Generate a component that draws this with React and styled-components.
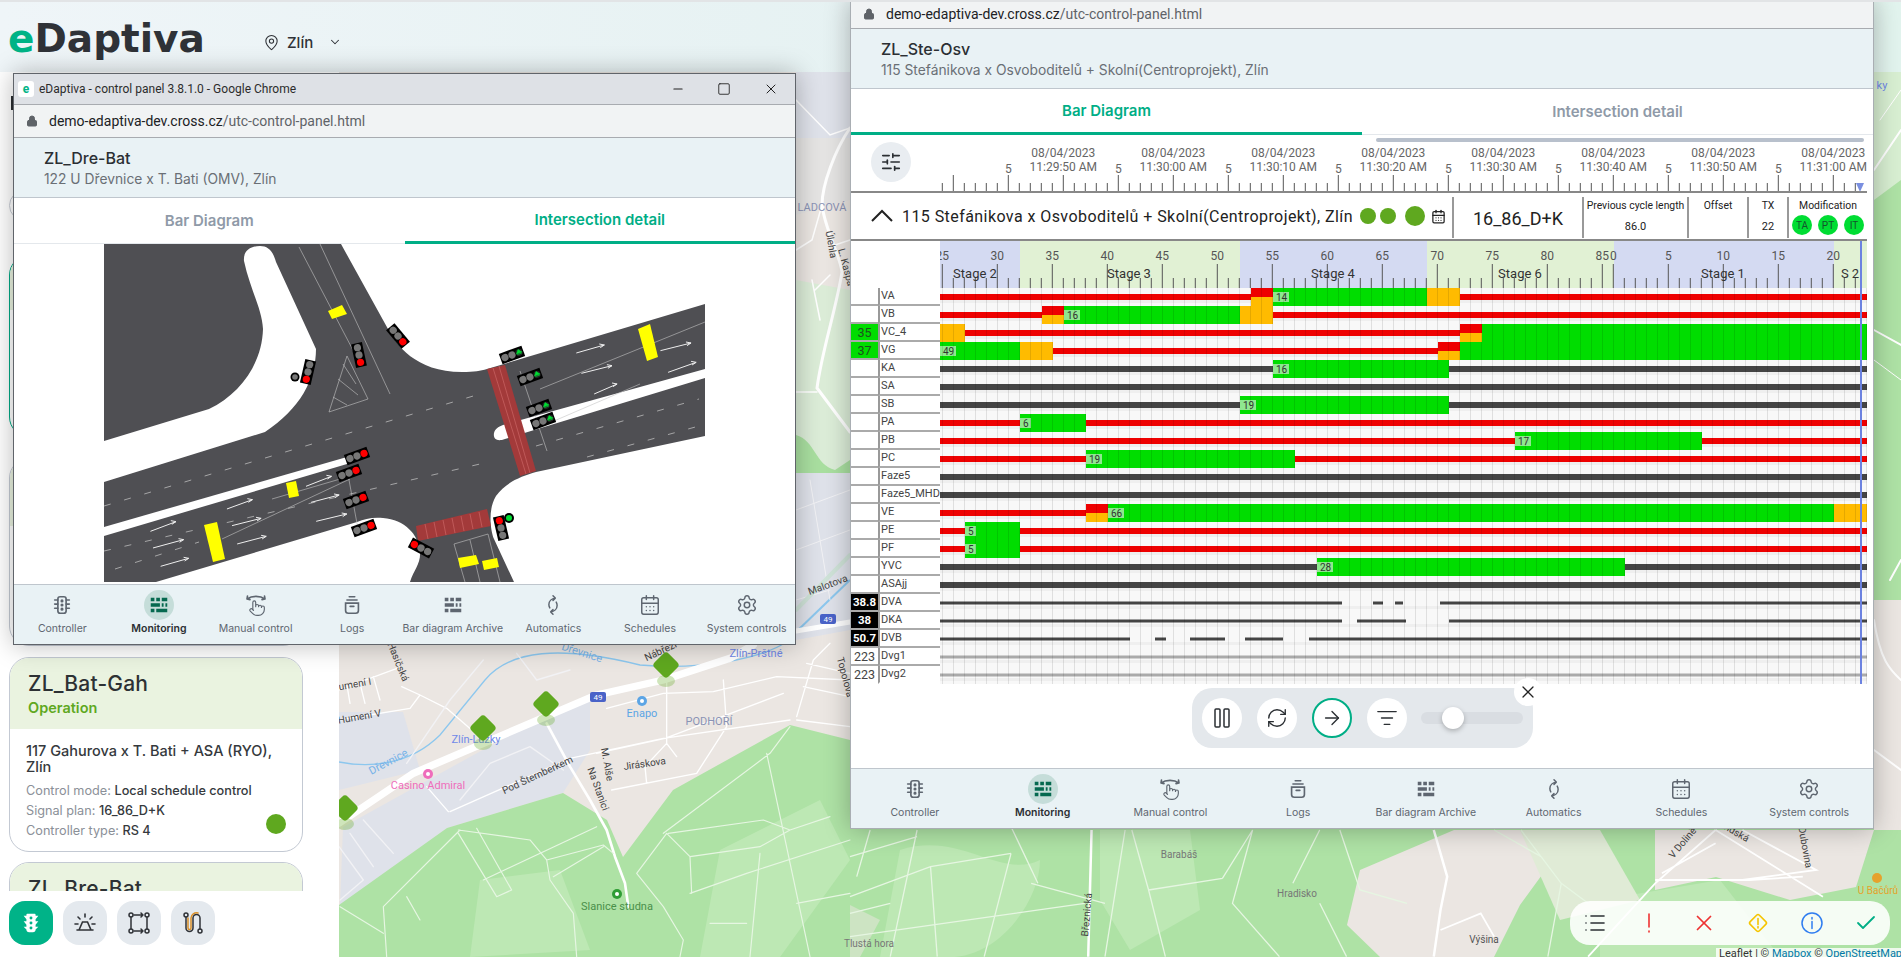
import React from 'react';
import styled, { createGlobalStyle, css } from 'styled-components';
import {
  Settings, CalendarDays, Pause, ArrowRight, X, Check, List, SlidersHorizontal, RefreshCw,
  ListFilter, Lock, Minus, Square, MapPin, ChevronDown
} from 'lucide-react';

const GlobalStyle = createGlobalStyle`
  html, body { margin: 0; padding: 0; background: #fff; }
  body { font-family: Inter, "Noto Sans", sans-serif; color: #2b2f33; }
  * { box-sizing: border-box; }
`;

const Page = styled.div`
  position: relative;
  width: 1901px;
  height: 957px;
  overflow: hidden;
  display: flex;
  flex-direction: column;
  background: #fff;
  border-top: 2px solid #e2e4e6;
`;

const TopBar = styled.header`
  height: 70px;
  display: flex;
  align-items: center;
  padding-left: 8px;
  background: linear-gradient(90deg, #eff5f8 0%, #e4f1f1 55%, #e2f4ee 100%);
`;

const Logo = styled.div`
  font-family: "DejaVu Sans", sans-serif;
  font-size: 39px;
  font-weight: 700;
  letter-spacing: 0;
  color: #2f3237;
  line-height: 1;
  margin-top: 2px;
  width: 255px;
  span { color: #00b386; }
`;

const Location = styled.div`
  display: flex;
  align-items: center;
  gap: 7px;
  font-size: 15px;
  font-weight: 500;
  color: #2f3237;
  margin-top: 10px;
  svg:last-child { margin-left: 8px; }
`;

const Main = styled.div`
  flex: 1;
  display: flex;
  min-height: 0;
`;

const LeftPanel = styled.aside`
  width: 339px;
  flex: none;
  display: flex;
  flex-direction: column;
  padding-left: 9px;
  background: #fff;
`;

const TitleMark = styled.div`
  width: 4px;
  height: 14px;
  margin: 24px 0 0 2px;
  background: #2b2f33;
`;

const SearchBox = styled.div`
  width: 294px;
  height: 31px;
  margin-top: 80px;
  border: 1px solid #c6cbd3;
  border-radius: 16px;
`;

const CardList = styled.div`
  flex: 1;
  min-height: 0;
  overflow: hidden;
  margin-top: 34px;
`;

const Card = styled.article`
  width: 294px;
  height: ${p => p.$h}px;
  margin-bottom: ${p => p.$mb}px;
  border: 1px solid ${p => (p.$selected ? '#00a884' : '#c3c9d3')};
  border-radius: 20px;
  overflow: hidden;
  background: #fff;
`;

const CardHead = styled.div`
  height: ${p => p.$h}px;
  padding: 13px 18px 0;
  background: #eaf3e0;
`;

const CardTitle = styled.div`
  font-size: 21px;
  font-weight: 500;
  letter-spacing: .2px;
  line-height: 26px;
  color: #2d3134;
`;

const CardState = styled.div`
  font-size: 14.5px;
  font-weight: 600;
  line-height: 22px;
  color: #5fa81f;
`;

const CardBody = styled.div`
  position: relative;
  padding: 14px 16px 0;
`;

const CardName = styled.div`
  font-size: 14.5px;
  font-weight: 500;
  line-height: 16px;
  margin-bottom: 6px;
  color: #35393d;
`;

const CardLine = styled.div`
  font-size: 12.7px;
  line-height: 20px;
  color: #8b9098;
  b { font-weight: 500; color: #35393d; }
`;

const CardDot = styled.span`
  position: absolute;
  right: 16px;
  bottom: 7px;
  width: 20px;
  height: 20px;
  border-radius: 50%;
  background: #5fa81f;
`;

const BottomBar = styled.div`
  height: 66px;
  flex: none;
  display: flex;
  gap: 10px;
  padding-top: 10px;
`;

const ModeButton = styled.button`
  width: 44px;
  height: 44px;
  padding: 0;
  border: 0;
  border-radius: 16px;
  display: flex;
  align-items: center;
  justify-content: center;
  background: ${p => (p.$active ? '#00b388' : '#e4e9ee')};
  color: ${p => (p.$active ? '#fff' : '#2f3237')};
`;

const MapArea = styled.div`
  flex: 1;
  min-width: 0;
  position: relative;
  background: #ebe6e2;
  svg { display: block; }
`;

const Attribution = styled.div`
  position: absolute;
  right: 0;
  bottom: 0;
  height: 9px;
  width: 185px;
  padding-left: 3px;
  overflow: hidden;
  font-family: Roboto, sans-serif;
  font-size: 11px;
  line-height: 11px;
  white-space: nowrap;
  background: rgba(255, 255, 255, .8);
  color: #333;
  span { color: #0078a8; }
`;

const StatusBar = styled.div`
  position: absolute;
  left: 1231px;
  top: 829px;
  width: 320px;
  height: 44px;
  display: flex;
  align-items: center;
  justify-content: space-between;
  padding: 0 12px 0 13px;
  border-radius: 20px;
  background: rgba(255, 255, 255, .88);
`;

const PopupWindow = styled.section`
  position: absolute;
  left: ${p => p.$left}px;
  top: ${p => p.$top}px;
  width: ${p => p.$w}px;
  height: ${p => p.$h}px;
  display: flex;
  flex-direction: column;
  background: #fff;
  box-shadow: 0 0 24px rgba(0, 0, 0, .28);
  ${p => p.$framed && css`border: 1px solid #60646a;`}
  ${p => !p.$framed && css`border-right: 1px solid #a9aeb3; border-bottom: 1px solid #a9aeb3; border-left: 1px solid #a9aeb3;`}
`;

const TitleBar = styled.div`
  height: 31px;
  flex: none;
  display: flex;
  align-items: center;
  padding-left: 4px;
  background: #dee1e6;
  border-bottom: 1px solid #a8abb0;
  font-family: Roboto, sans-serif;
  font-size: 12px;
  color: #2c2c2c;
`;

const Favicon = styled.span`
  width: 16px;
  height: 16px;
  margin-right: 5px;
  display: flex;
  align-items: center;
  justify-content: center;
  border-radius: 3px;
  background: #fff;
  color: #00b386;
  font-weight: 700;
  font-size: 12px;
`;

const WindowControls = styled.div`
  margin-left: auto;
  display: flex;
  gap: 32px;
  padding-right: 16px;
  align-items: center;
  color: #222;
`;

const AddressBar = styled.div`
  height: ${p => p.$h}px;
  flex: none;
  display: flex;
  align-items: center;
  gap: 11px;
  padding-left: 12px;
  background: #f1f3f4;
  border-bottom: 1px solid #a8abb0;
  font-family: Roboto, sans-serif;
  font-size: 14px;
  color: #202124;
  span { color: #5f6368; }
`;

const WindowHead = styled.div`
  height: 60px;
  flex: none;
  padding: 9px 30px 0;
  background: #e9f2f5;
  border-bottom: 1px solid #bfc6cd;
`;

const WindowTitle = styled.div`
  font-size: 16px;
  font-weight: 500;
  line-height: 23px;
  color: #2b2f33;
`;

const WindowSub = styled.div`
  font-size: 13.8px;
  line-height: 18px;
  color: #6a6f75;
`;

const Tabs = styled.div`
  height: 46px;
  flex: none;
  display: grid;
  grid-template-columns: 1fr 1fr;
`;

const Tab = styled.div`
  display: flex;
  align-items: center;
  justify-content: center;
  font-size: 15px;
  font-weight: 600;
  color: ${p => (p.$active ? '#00ae86' : '#8f9aa8')};
  border-bottom: ${p => (p.$active ? '3px solid #00ae86' : '1px solid #e4e8ec')};
`;

const WindowContent = styled.div`
  flex: 1;
  min-height: 0;
  position: relative;
  display: flex;
  flex-direction: column;
`;

const IntersectionView = styled.div`
  flex: 1;
  display: flex;
  justify-content: center;
  svg { display: block; }
`;

const NavBar = styled.nav`
  height: 60px;
  flex: none;
  display: flex;
  background: #e9f2f5;
  border-top: 1px solid #bfc6cd;
`;

const NavItem = styled.div`
  flex: 1 1 0;
  padding: 5px 2px 0;
  display: flex;
  flex-direction: column;
  align-items: center;
  font-size: 10.5px;
  font-weight: ${p => (p.$active ? 600 : 400)};
  color: ${p => (p.$active ? '#2b2f33' : '#5e6670')};
  white-space: nowrap;
`;

const NavIcon = styled.span`
  width: 30px;
  height: 30px;
  border-radius: 50%;
  display: flex;
  align-items: center;
  justify-content: center;
  margin-bottom: 2px;
  background: ${p => (p.$active ? '#c5ddd9' : 'transparent')};
  color: ${p => (p.$active ? '#05694f' : '#5e6670')};
`;

const ScrollThumb = styled.div`
  position: absolute;
  top: 3px;
  left: 525px;
  width: 488px;
  height: 4px;
  border-radius: 2px;
  background: #b8c0cc;
`;

const Chart = styled.div`
  width: 1016px;
  font-family: Roboto, sans-serif;
`;

const TimeRow = styled.div`
  height: 58px;
  display: flex;
  border-bottom: 2px solid #888;
  svg { display: block; }
`;

const LeftGutter = styled.div`
  width: 89px;
  flex: none;
  padding: 7px 0 0 20px;
`;

const RoundIcon = styled.div`
  width: 40px;
  height: 40px;
  border-radius: 50%;
  background: #e9edf1;
  display: flex;
  align-items: center;
  justify-content: center;
  color: #2b2f33;
`;

const InfoRow = styled.div`
  height: 48px;
  display: flex;
  align-items: stretch;
  border-bottom: 2px solid #888;
  color: #222;
`;

const InfoName = styled.div`
  width: 509px;
  display: flex;
  align-items: center;
  font-size: 16px;
  letter-spacing: .43px;
  padding-left: 20px;
  gap: 9px;
  white-space: nowrap;
  svg { flex: none; }
`;

const SignalDots = styled.div`
  flex: 1;
  display: flex;
  align-items: center;
  gap: 4px;
`;

const SignalDot = styled.span`
  width: ${p => p.$size}px;
  height: ${p => p.$size}px;
  margin-right: ${p => p.$mr || 0}px;
  border-radius: 50%;
  background: #5fa81f;
`;

const InfoCell = styled.div`
  width: ${p => p.$w}px;
  flex: none;
  margin: 4px 0 1px;
  padding-top: 2px;
  border-left: 2px solid #999;
  display: flex;
  flex-direction: column;
  align-items: center;
  font-size: ${p => p.$size || 11}px;
  justify-content: ${p => (p.$center ? 'center' : 'flex-start')};
  white-space: nowrap;
  small { font-size: 10.4px; line-height: 14px; }
  em { font-style: normal; font-size: 11px; margin-top: 7px; line-height: 14px; }
`;

const ModRow = styled.div`
  display: flex;
  gap: 6px;
  margin-top: 2px;
`;

const ModBadge = styled.span`
  width: 20px;
  height: 20px;
  border-radius: 50%;
  background: #00dd33;
  display: flex;
  align-items: center;
  justify-content: center;
  font-size: 10px;
  color: #14532d;
`;

const StageRow = styled.div`
  height: 47px;
  padding-left: 89px;
  svg { display: block; }
`;

const RowsWrap = styled.div`
  position: relative;
`;

const CursorLine = styled.div`
  position: absolute;
  left: 1008.5px;
  top: -47px;
  bottom: 0;
  width: 2px;
  background: #6c82e0;
`;

const Row = styled.div`
  height: 18px;
  display: flex;
`;

const ValueCell = styled.div`
  width: 27px;
  flex: none;
  display: flex;
  align-items: center;
  justify-content: center;
  font-size: 12.5px;
  border-bottom: 2px solid ${p => (p.$last ? 'transparent' : '#aaa')};
  ${p => p.$tone === 'green' && css`background: #00dd00; color: #1f4f1f;`}
  ${p => p.$tone === 'black' && css`background: #000; color: #fff; font-weight: 700; font-size: 11.5px;`}
  ${p => p.$tone === 'plain' && css`color: #444;`}
`;

const NameCell = styled.div`
  width: 62px;
  flex: none;
  padding-left: 1px;
  border-left: 2px solid #999;
  border-bottom: 2px solid ${p => (p.$last ? 'transparent' : '#aaa')};
  font-size: 11px;
  line-height: 15px;
  color: #444;
  white-space: nowrap;
`;

const Track = styled.div`
  position: relative;
  width: 927px;
  height: 18px;
  background:
    linear-gradient(180deg, #f8f8f8 0 12px, #efefef 12px 15px, #f8f8f8 15px);
  &::after {
    content: '';
    position: absolute;
    inset: 0;
    background: repeating-linear-gradient(90deg, transparent 0 2px, rgba(0, 0, 0, .1) 2px 3px, transparent 3px 11px);
  }
  svg { display: block; }
`;

const PlayerPanel = styled.div`
  position: relative;
  align-self: center;
  margin-top: 4px;
  width: 341px;
  height: 60px;
  padding: 0 10px;
  display: flex;
  align-items: center;
  gap: 15px;
  border-radius: 20px;
  background: #e4e8ec;
`;

const PlayerButton = styled.button`
  width: 40px;
  height: 40px;
  padding: 0;
  flex: none;
  border-radius: 50%;
  display: flex;
  align-items: center;
  justify-content: center;
  background: #fff;
  color: #2b2f33;
  border: ${p => (p.$active ? '2px solid #00ae86' : '0')};
`;

const SliderTrack = styled.div`
  position: relative;
  flex: 1;
  height: 12px;
  margin-left: -1px;
  border-radius: 6px;
  background: #d9dde2;
`;

const SliderThumb = styled.span`
  position: absolute;
  left: 21px;
  top: -5px;
  width: 22px;
  height: 22px;
  border-radius: 50%;
  background: #fff;
  box-shadow: 0 2px 5px rgba(0, 0, 0, .25);
`;

const ClosePlayer = styled.button`
  position: absolute;
  right: -9px;
  top: -10px;
  width: 28px;
  height: 28px;
  padding: 0;
  border: 0;
  border-radius: 50%;
  display: flex;
  align-items: center;
  justify-content: center;
  background: #fff;
  color: #222;
`;

const ControllerIcon = ({ size = 22 }) => (
  <svg width={size} height={size} viewBox="0 0 24 24" fill="none" stroke="currentColor" strokeWidth="1.8" strokeLinecap="round">
    <rect x="7.5" y="3" width="9" height="18" rx="2.5" />
    <path d="M4 6.5h3.5M4 11h3.5M4 15.5h3.5M16.5 6.5H20M16.5 11H20M16.5 15.5H20" />
    <circle cx="12" cy="7.5" r=".8" /><circle cx="12" cy="12" r=".8" /><circle cx="12" cy="16.5" r=".8" />
  </svg>
);

const GridIcon = ({ size = 22 }) => (
  <svg width={size} height={size} viewBox="0 0 24 24" fill="currentColor">
    <path d="M3 4h4v4H3zM9 4h4v4H9zM15 4h6v4h-6zM3 10h10v4H3zM15 10h2v4h-2zM19 10h2v4h-2zM3 16h4v4H3zM9 16h12v4H9z" />
  </svg>
);

const ManualIcon = ({ size = 24 }) => (
  <svg width={size} height={size} viewBox="0 0 24 24" fill="none" stroke="currentColor" strokeWidth="1.6" strokeLinecap="round" strokeLinejoin="round">
    <path d="M3 6c5-3.5 13-3.5 18 0M3 6l.5-3M3 6l3 .6M21 6l-.5-3M21 6l-3 .6" />
    <g transform="translate(4.5 6.5) scale(.72)">
      <path d="M18 11v-1a2 2 0 0 0-4 0M14 10V9a2 2 0 0 0-4 0v1M10 9.5V4a2 2 0 0 0-4 0v10" />
      <path d="M18 11a2 2 0 1 1 4 0v3a8 8 0 0 1-8 8h-2c-2.8 0-4.5-.86-5.99-2.34l-3.6-3.6a2 2 0 0 1 2.83-2.82L7 15" />
    </g>
  </svg>
);

const LogsIcon = ({ size = 22 }) => (
  <svg width={size} height={size} viewBox="0 0 24 24" fill="none" stroke="currentColor" strokeWidth="1.8" strokeLinecap="round">
    <path d="M9 3h6M6.5 6.5h11M10 13.5h4" />
    <path d="M5 10h14v8a3 3 0 0 1-3 3H8a3 3 0 0 1-3-3z" />
  </svg>
);

const AutoIcon = ({ size = 22 }) => (
  <svg width={size} height={size} viewBox="0 0 24 24" fill="none" stroke="currentColor" strokeWidth="1.6" strokeLinecap="round" strokeLinejoin="round">
    <path d="M12 2l2.500 2.500L12 7M14.500 4.500C10.500 5 7.500 7.800 7.500 11.500c0 1.400.4 2.700 1 3.700" />
    <path d="M12 22l-2.500-2.500L12 17M9.500 19.500c4-.5 7-3.300 7-7 0-1.400-.4-2.700-1-3.700" />
  </svg>
);

const navItems = [
  ['Controller', <ControllerIcon />],
  ['Monitoring', <GridIcon />],
  ['Manual control', <ManualIcon />],
  ['Logs', <LogsIcon />],
  ['Bar diagram Archive', <GridIcon />],
  ['Automatics', <AutoIcon />],
  ['Schedules', <CalendarDays size={22} strokeWidth={1.6} />],
  ['System controls', <Settings size={22} strokeWidth={1.6} />],
];

const BottomNav = () => (
  <NavBar>
    {navItems.map(([label, icon]) => (
      <NavItem key={label} $active={label === 'Monitoring'}>
        <NavIcon $active={label === 'Monitoring'}>{icon}</NavIcon>
        {label}
      </NavItem>
    ))}
  </NavBar>
);

// all chart x values below are measured in page pixels, 939 is where the track starts
const X0 = 939;
const END = 1866;

const rows = [
  { name: 'VA', segs: [['r', 1250], ['s', 1272], ['g', 1426, '14'], ['y', 1459], ['r', END]] },
  { name: 'VB', segs: [['r', 1041], ['s', 1063], ['g', 1239, '16'], ['y', 1272], ['r', END]] },
  { name: 'VC_4', value: '35', tone: 'green', segs: [['y', 964], ['r', 1459], ['s', 1481], ['g', END]] },
  { name: 'VG', value: '37', tone: 'green', segs: [['g', 1019, '49'], ['y', 1052], ['r', 1437], ['s', 1459], ['g', END]] },
  { name: 'KA', segs: [['d', 1272], ['g', 1448, '16'], ['d', END]] },
  { name: 'SA', segs: [['d', END]] },
  { name: 'SB', segs: [['d', 1239], ['g', 1448, '19'], ['d', END]] },
  { name: 'PA', segs: [['r', 1019], ['g', 1085, '6'], ['r', END]] },
  { name: 'PB', segs: [['r', 1514], ['g', 1701, '17'], ['r', END]] },
  { name: 'PC', segs: [['r', 1085], ['g', 1294, '19'], ['r', END]] },
  { name: 'Faze5', segs: [['d', END]] },
  { name: 'Faze5_MHD', segs: [['d', END]] },
  { name: 'VE', segs: [['r', 1085], ['s', 1107], ['g', 1833, '66'], ['y', END]] },
  { name: 'PE', segs: [['r', 964], ['g', 1019, '5'], ['r', END]] },
  { name: 'PF', segs: [['r', 964], ['g', 1019, '5'], ['r', END]] },
  { name: 'YVC', segs: [['d', 1316], ['g', 1624, '28'], ['d', END]] },
  { name: 'ASAjj', segs: [['d', END]] },
  { name: 'DVA', value: '38.8', tone: 'black', segs: [['t', 1341], ['_', 1372], ['t', 1382], ['_', 1394], ['t', 1402], ['_', 1439], ['t', END]] },
  { name: 'DKA', value: '38', tone: 'black', segs: [['t', 1341], ['_', 1356], ['t', 1405], ['_', 1448], ['t', END]] },
  { name: 'DVB', value: '50.7', tone: 'black', segs: [['t', 1129], ['_', 1154], ['t', 1165], ['_', 1189], ['t', 1224], ['_', 1244], ['t', 1282], ['_', 1308], ['t', END]] },
  { name: 'Dvg1', value: '223', tone: 'plain', segs: [['l', END]] },
  { name: 'Dvg2', value: '223', tone: 'plain', segs: [['l', END]] },
];

const RED = '#ee0000';
const GREEN = '#00dd00';
const AMBER = '#ffbb00';
const DARK = '#444';

const Segment = ({ kind, x, w, label }) => {
  switch (kind) {
    case 'r': return <rect x={x} y="6" width={w} height="6" fill={RED} />;
    case 'd': return <rect x={x} y="6" width={w} height="6" fill={DARK} />;
    case 't': return <rect x={x} y="7.500" width={w} height="3" fill={DARK} />;
    case 'l': return <rect x={x} y="7.500" width={w} height="3" fill="#aaa" />;
    case 'y': return <rect x={x} y="0" width={w} height="18" fill={AMBER} />;
    case 's': return (
      <g>
        <rect x={x} y="0" width={w} height="9" fill={RED} />
        <rect x={x} y="9" width={w} height="9" fill={AMBER} />
      </g>
    );
    case 'g': return (
      <g>
        <rect x={x} y="0" width={w} height="18" fill={GREEN} />
        {label && <rect x={x} y="4" width={label.length > 1 ? 16 : 11} height="10" fill="#8fe88f" />}
        {label && <text x={x + 3} y="12.500" fontSize="10" fill="#333">{label}</text>}
      </g>
    );
    default: return null;
  }
};

const TrackRow = ({ segs }) => {
  let from = X0;
  return (
    <Track>
      <svg width="927" height="18">
        {segs.map(([kind, to, label]) => {
          const seg = <Segment key={to} kind={kind} x={from - X0} w={to - from} label={label} />;
          from = to;
          return seg;
        })}
      </svg>
    </Track>
  );
};

const TimeAxis = () => {
  const ticks = [];
  for (let i = 0; i < 84; i++) {
    const x = 2.3 + i * 11;
    const tall = (i - 1) % 5 === 0;
    ticks.push(<line key={i} x1={x} x2={x} y1={tall ? 40 : 48} y2="56" stroke="#555" strokeWidth="1" />);
  }
  const times = ['11:29:50 AM', '11:30:00 AM', '11:30:10 AM', '11:30:20 AM', '11:30:30 AM', '11:30:40 AM', '11:30:50 AM', '11:31:00 AM'];
  return (
    <svg width="927" height="56">
      {ticks}
      {times.map((t, i) => {
        const x = 123.3 + i * 110;
        return (
          <g key={t} fontSize="12" fill="#666" textAnchor="middle">
            <text x={x - 55} y="38">5</text>
            <text x={x} y="22">08/04/2023</text>
            <text x={x} y="36">{t}</text>
          </g>
        );
      })}
      <path d="M916 48h8l-4 9z" fill="#7a8fe0" />
    </svg>
  );
};

const stages = [
  { label: 'Stage 2', from: 939, to: 1019, at: 974, color: '#d4daf2' },
  { label: 'Stage 3', from: 1019, to: 1239, at: 1128, color: '#e1f1d4' },
  { label: 'Stage 4', from: 1239, to: 1426, at: 1332, color: '#d4daf2' },
  { label: 'Stage 6', from: 1426, to: 1613, at: 1519, color: '#e1f1d4' },
  { label: 'Stage 1', from: 1613, to: 1833, at: 1722, color: '#d4daf2' },
  { label: 'S 2', from: 1833, to: 1866, at: 1849, color: '#e1f1d4' },
];

const stageNumbers = [25, 30, 35, 40, 45, 50, 55, 60, 65, 70, 75, 80, 85];

const StageAxis = () => {
  const ticks = [];
  for (let i = 0; i < 84; i++) {
    const x = 2.3 + i * 11;
    const tall = i > 60 ? (i - 61) % 5 === 0 : i % 5 === 0;
    ticks.push(<line key={i} x1={x} x2={x} y1={tall ? 23 : 37} y2="47" stroke="#555" strokeWidth="1" />);
  }
  return (
    <svg width="927" height="47">
      {stages.map(s => <rect key={s.label} x={s.from - X0} y="0" width={s.to - s.from} height="47" fill={s.color} />)}
      {ticks}
      <g fontSize="12" fill="#555" textAnchor="middle">
        {stageNumbers.map((n, i) => <text key={n} x={2.3 + i * 55} y="19">{n}</text>)}
        <text x="673.3" y="19">0</text>
        <text x="728.3" y="19">5</text>
        <text x="783.3" y="19">10</text>
        <text x="838.3" y="19">15</text>
        <text x="893.3" y="19">20</text>
      </g>
      <g fontSize="13" fill="#333" textAnchor="middle">
        {stages.map(s => <text key={s.label} x={s.at - X0} y="37">{s.label}</text>)}
      </g>
    </svg>
  );
};

const BarDiagram = () => (
  <Chart>
    <TimeRow>
      <LeftGutter>
        <RoundIcon><SlidersHorizontal size={22} strokeWidth={1.8} /></RoundIcon>
      </LeftGutter>
      <TimeAxis />
    </TimeRow>
    <InfoRow>
      <InfoName>
        <svg width="22" height="14" viewBox="0 0 22 14" fill="none" stroke="#222" strokeWidth="2">
          <path d="M1 12l10-10 10 10" />
        </svg>
        115 Stefánikova x Osvoboditelů + Skolní(Centroprojekt), Zlín
      </InfoName>
      <SignalDots>
        <SignalDot $size={16} /><SignalDot $size={16} $mr={5} /><SignalDot $size={20} $mr={2} />
        <CalendarDays size={15} strokeWidth={2} color="#222" />
      </SignalDots>
      <InfoCell $w={130} $size={18} $center>16_86_D+K</InfoCell>
      <InfoCell $w={105}><small>Previous cycle length</small><em>86.0</em></InfoCell>
      <InfoCell $w={60}><small>Offset</small></InfoCell>
      <InfoCell $w={40}><small>TX</small><em>22</em></InfoCell>
      <InfoCell $w={80}>
        <small>Modification</small>
        <ModRow><ModBadge>TA</ModBadge><ModBadge>PT</ModBadge><ModBadge>IT</ModBadge></ModRow>
      </InfoCell>
    </InfoRow>
    <StageRow><StageAxis /></StageRow>
    <RowsWrap>
      {rows.map((r, i) => {
        const last = i === rows.length - 1;
        return (
          <Row key={r.name}>
            <ValueCell $tone={r.tone} $last={last}>{r.value}</ValueCell>
            <NameCell $last={last}>{r.name}</NameCell>
            <TrackRow segs={r.segs} />
          </Row>
        );
      })}
      <CursorLine />
    </RowsWrap>
  </Chart>
);

// one signal head, the lit lamp sits on the far end of the local x axis
const Signal = ({ x, y, rot, lit = '#ff0000', arrow }) => (
  <g transform={`translate(${x} ${y}) rotate(${rot})`}>
    <rect x="-12" y="-5.500" width="24" height="11" fill="#000" />
    <circle cx="-7.500" r="3.600" fill="#777" />
    <circle cx="0" r="3.600" fill="#777" />
    <circle cx="7.500" r="3.600" fill={arrow ? '#222' : lit} />
    {arrow && <path d="M5 1.500h5M7.500 -3l2.800 3.500h-5.600z" fill={lit} stroke={lit} strokeWidth=".6" />}
  </g>
);

const RED_L = '#ff0000';
const GRN_L = '#00dd33';

const arrows = [
  [295, 607, 345, 578], [300, 657, 360, 632], [315, 712, 370, 688], [445, 540, 495, 512],
  [455, 590, 512, 568], [465, 645, 522, 622], [600, 472, 650, 442], [610, 520, 665, 498],
  [620, 577, 680, 555], [1130, 72, 1185, 48], [1140, 133, 1200, 110], [1295, 65, 1355, 42],
  [1310, 130, 1365, 100], [1165, 195, 1210, 165],
];

const IntersectionDrawing = () => (
  <svg width="601" height="338" viewBox="104 245 601 338">
    {/* road surface */}
    <path
      fill="#4f4f53"
      d="M104 245H341L388 330C396 345 415 373 462 373C475 373 480 372 487 370L705 305V437L536 473C522 477 506 483 496 497C488 510 490 530 494 540L514 583H410C414 570 421 565 420 552C418 535 405 521 383 519C372 518 365 520 357 523L156 583H104Z"
    />
    {/* island, left finger and the band under it */}
    <path
      fill="#fff"
      d="M244 262C243 252 250 247 260 247C268 247 273 252 276 263L316 350C316 380 300 410 265 433L104 483V442L209 410C240 395 262 365 263 330C262 310 250 290 244 262Z"
    />
    <path fill="#fff" d="M705 370V379L505 440C497 443 493 440 494 434C495 430 498 428 503 426Z" />
    <path fill="#fff" d="M104 528L347 458V465L104 537Z" />
    {/* crossings */}
    <path fill="#a33a3a" d="M487 370L505 366L536 472L520 477Z" />
    <path fill="#a33a3a" d="M416 527L487 510L491 527L418 542Z" />
    <g stroke="#c66" strokeWidth=".7" fill="none">
      <path d="M493 369L526 475M499 367L530 474" />
      <path d="M425 525l3 15M434 523l3 15M443 521l3 15M452 519l3 15M461 517l3 15M470 515l3 15M479 513l3 15" />
    </g>
    {/* lane lines */}
    <g stroke="#bbb" strokeWidth=".8" fill="none" strokeDasharray="7 14">
      <path d="M104 507L480 395M104 552L480 465M536 447L699 400M587 458L699 427M115 570L199 543" />
    </g>
    <g stroke="#c5c5c5" strokeWidth=".6" fill="none">
      <path d="M299 248L355 355M320 245L390 395" />
      <path d="M347 357L368 400L329 413Z" />
      <path d="M343 365l13 20M338 380l20 16M333 398l14 8" />
      <path d="M520 372L547 452M347 470L358 530" />
      <path d="M540 390L705 323M540 428L640 385M222 540L350 480M272 500L347 478" />
      <path d="M454 545L488 535L500 583M470 541L480 583M454 545L465 583" />
    </g>
    <g transform="translate(0 330) scale(.51 .3333)" stroke="#eee" fill="none">
      {arrows.map(([a, b, c, d]) => (
        <path key={a + b} vectorEffect="non-scaling-stroke" strokeWidth="1" d={`M${a} ${b}L${c} ${d}M${c - 10} ${d - 3}L${c} ${d}L${c - 8} ${d + 8}`} />
      ))}
    </g>
    {/* yellow stop bars */}
    <g fill="#ffff00">
      <path d="M638 330L650 325L658 358L647 362Z" />
      <path d="M328 312L342 306L347 315L332 320Z" />
      <path d="M286 484L296 482L299 497L289 499Z" />
      <path d="M204 526L217 523L225 560L213 563Z" />
      <path d="M458 559L476 556L479 565L460 569Z" />
      <path d="M482 562L497 559L499 568L484 571Z" />
    </g>
    <Signal x={398} y={337} rot={50} lit={RED_L} />
    <Signal x={359} y={356} rot={78} lit={RED_L} />
    <Signal x={308} y={373} rot={103} lit={RED_L} />
    <circle cx="295" cy="378" r="4.500" fill="#000" /><circle cx="295" cy="378" r="2.800" fill="#777" />
    <Signal x={512} y={356} rot={-20} lit={GRN_L} arrow />
    <Signal x={530} y={378} rot={-20} lit={GRN_L} arrow />
    <Signal x={539} y={409} rot={-20} lit={GRN_L} arrow />
    <Signal x={543} y={422} rot={-20} lit={GRN_L} arrow />
    <Signal x={357} y={457} rot={-20} lit={RED_L} />
    <Signal x={349} y={474} rot={-20} lit={RED_L} />
    <Signal x={356} y={501} rot={-20} lit={RED_L} />
    <Signal x={364} y={529} rot={-20} lit={RED_L} />
    <Signal x={501} y={529} rot={-103} lit={RED_L} />
    <circle cx="509" cy="519" r="5" fill="#000" /><circle cx="509" cy="519" r="3" fill={GRN_L} />
    <Signal x={421} y={549} rot={-152} lit={RED_L} />
  </svg>
);

const mapLabels = [
  ['Casino Admiral', 428, 789, 0, '#ef6dbb', 11],
  ['Zlín-Lužky', 476, 743, 0, '#6f88e8', 11],
  ['Dřevnice', 390, 765, -28, '#77b2e8', 11],
  ['Dřevnice', 581, 656, 18, '#77b2e8', 11],
  ['Enapo', 642, 717, 0, '#5ca5e5', 11],
  ['PODHOŘÍ', 709, 725, 0, '#8a93b5', 11],
  ['Pod Šternberkem', 539, 778, -25, '#444', 10],
  ['Na Stanici', 595, 790, 70, '#444', 10],
  ['M. Alše', 604, 765, 80, '#444', 10],
  ['Jiráskova', 645, 767, -8, '#444', 10],
  ['Slanice studna', 617, 910, 0, '#4a8f4a', 11],
  ['Zlín-Prštné', 756, 657, 0, '#6f88e8', 11],
  ['Nábřeží', 662, 654, -25, '#444', 10],
  ['Topolová', 842, 678, 75, '#444', 10],
  ['Hasičská', 395, 663, 68, '#444', 10],
  ['Humení I', 352, 688, -10, '#444', 10],
  ['Humení V', 360, 720, -10, '#444', 10],
  ['Barabáš', 1179, 858, 0, '#777', 10],
  ['Hradisko', 1297, 897, 0, '#777', 10],
  ['Březnická', 1090, 915, -85, '#444', 10],
  ['Tlustá hora', 869, 947, 0, '#777', 10],
  ['Výšina', 1484, 943, 0, '#555', 10],
  ['V Dolině', 1685, 845, -50, '#444', 10],
  ['Dubovina', 1802, 848, 80, '#444', 10],
  ['Mendská', 1729, 832, 30, '#444', 10],
  ['U Bačůrů', 1878, 894, 0, '#e5a22c', 10],
  ['LADCOVÁ', 822, 211, 0, '#8a93b5', 11],
  ['Úlehla', 828, 245, 80, '#444', 10],
  ['L. Kašpa', 843, 268, 75, '#444', 10],
  ['Malotova', 829, 588, -20, '#444', 10],
  ['ky', 1882, 89, 0, '#6f88e8', 11],
];

const pins = [[345, 808], [483, 728], [546, 704], [666, 665]];

const MapBackground = () => (
  <svg width="1562" height="885" viewBox="339 72 1562 885">
    <rect x="339" y="72" width="1562" height="885" fill="#ebe6e2" />
    {/* area behind the top windows */}
    <rect x="796" y="72" width="54" height="66" fill="#dfe2ea" />
    <path fill="#e5e4e3" d="M796 138H850V200L796 215Z" />
    <path fill="#dcedd8" d="M796 280L850 290V478H796Z" />
    <path fill="#a9dfa0" d="M796 435C815 440 815 465 835 470L850 460V478H796Z" />
    <path fill="#dfe2ea" d="M796 473H850V630L796 640Z" />
    <path fill="#aee2a5" d="M1874 72H1901V610L1874 600Z" />
    <path fill="#d8efd2" d="M1874 72H1901V180L1874 200Z" />
    {/* industrial grey zones */}
    <path fill="#dfe2ea" d="M339 712L403 712L420 770L339 790Z" />
    <path fill="#dfe2ea" d="M343 827L537 720L590 697L590 750L563 793L447 828L340 905Z" />
    {/* forest, everything under the town */}
    <path
      fill="#aee2a5"
      d="M339 905L447 828L563 793L607 820L623 857L673 790L790 725L850 740H1901V957H339Z"
    />
    <g fill="#bde8b4">
      <path d="M900 850C960 830 1000 880 1040 860C1040 900 1000 957 950 957H880Z" />
      <path d="M1600 900L1720 880L1780 957H1600Z" />
      <path d="M480 880L560 870L590 950L470 957Z" />
      <path d="M720 850L820 800L850 860L780 957L700 957Z" />
      <path d="M1100 830L1190 830L1200 910L1130 950L1100 900Z" />
    </g>
    <g fill="#ebe6e2">
      <path d="M1360 870L1454 830H1520L1555 857L1520 905L1494 957H1380L1347 925Z" />
      <path d="M1655 830H1874L1856 887L1790 900L1716 877L1655 890Z" />
      <path d="M1874 600H1901V830H1874Z" />
      <path d="M850 905L880 920L860 957H850Z" opacity=".5" />
    </g>
    <path fill="#e0ebd6" d="M1520 830L1600 830L1640 900L1560 920Z" />
    {/* blue stream */}
    <g fill="none" stroke="#8cc7ee" strokeWidth="1.300">
      <path d="M339 762C370 768 410 765 440 735L485 680C510 650 560 645 640 665C700 670 760 660 790 640" />
      <path d="M796 632L850 580" strokeWidth="2" />
    </g>
    {/* town streets */}
    <g transform="translate(330 640) scale(.33333)" fill="none" stroke="#fff" strokeLinejoin="round" strokeLinecap="round">
      <path strokeWidth="4" d="M215 140L270 165L350 205L425 270M27 240L240 205L270 165M60 190L50 130M105 190L90 130M150 180L130 110M27 150L215 80M360 515L720 355L1000 295L1380 240M355 515L290 440M800 340L1005 295L1360 160M1010 80L1010 310L945 380L950 430M845 450L1100 400L1190 260M1010 310L1040 350M1400 230L1450 60L1500 10M1420 140L1560 170M1430 70L1560 100M1400 240L1560 260M830 205L1000 160L1150 155L1340 110L1560 120M1180 120L1190 260" />
      <path strokeWidth="8" d="M650 250L720 380L780 480L830 570L855 650L885 730L895 800" />
      <path strokeWidth="22" d="M27 550L250 400L600 250L800 165L1000 120L1200 55L1270 15" />
      <path strokeWidth="4" d="M60 580L130 680M100 540L190 640M390 480L480 370L600 320L700 390M27 620L100 720L30 780M560 40L620 120L720 90M460 60L360 180L230 370" stroke="#f2f2f5" />
      {/* forest paths */}
      <g strokeWidth="3.500" stroke="#e6f6e2">
        <path d="M385 580L500 770L545 750L440 565M390 570L160 800L170 950M385 570L600 600L650 660L660 720L730 820L740 950M650 660L820 615L850 640M460 720L800 560M670 710L820 620M1010 580L1080 650L1085 760M1010 580L920 700L1000 800L1060 900L1050 950M1015 580L1300 540L1380 570L1500 530M1380 260L1320 340L1000 580M1310 340L1440 950M1080 650L1290 620L1380 570M1290 640L1260 950M1400 790L1560 760M1080 760L1250 700L1560 600M1140 850L1250 850M30 800L160 880M230 770L270 840" />
      </g>
    </g>
    {/* forest south of the bar diagram window */}
    <g transform="translate(850 670) scale(.671 .33333)" fill="none" stroke="#e6f6e2">
      <path
        vectorEffect="non-scaling-stroke"
        strokeWidth="1.300"
        d="M0 680L120 590L240 550M240 470L280 640M445 660L555 625M0 800L350 700M410 480L380 860M100 480L60 860M0 560L100 500M600 480L570 700L640 860M700 480L660 640M1000 480L1060 640L1040 860M30 480L10 620M120 590L130 860M240 550L200 860M445 660L420 480M445 660L470 860M555 625L600 480M700 700L740 860M730 480L760 660L830 700M960 480L1030 560M0 730L60 700M270 640L380 700M1060 640L1100 700"
      />
      <path vectorEffect="non-scaling-stroke" strokeWidth="2.500" stroke="#fff" d="M360 480L355 860M870 480L890 620L880 720L870 860" />
      <path vectorEffect="non-scaling-stroke" strokeWidth="1.800" stroke="#fff" d="M1100 860L1200 640L1290 480M1200 630L1340 630L1420 620M1330 480L1440 600L1330 630M1290 480L1450 680M1210 610L1290 520M880 780L940 730L960 800" />
    </g>
    {/* roads between the two windows */}
    <g fill="none" stroke="#fff" strokeLinecap="round">
      <path strokeWidth="3" d="M850 128C835 150 822 185 822 205C825 230 840 255 842 272C836 310 822 350 817 388L850 432" />
      <path strokeWidth="1.500" d="M796 100L830 135L850 128M822 205L812 240L796 250M835 245L850 240M830 275L815 290M812 280L820 320M796 392L817 392" />
      <path strokeWidth="1" stroke="#f2f2f5" d="M796 510L850 490M796 550L850 530M810 480L830 600M796 600L830 590" />
      <path strokeWidth="5" d="M796 631L850 622" />
      <path strokeWidth="4" d="M796 610L850 555" stroke="#cfe3d8" />
      <path strokeWidth="2" d="M1874 170L1901 130M1874 330L1901 345M1874 620C1880 660 1890 670 1901 680M1874 750L1901 770M1890 580L1901 560" />
      <path strokeWidth="1" d="M1874 360L1901 380M1880 120L1901 90" />
    </g>
    <rect x="820" y="614" width="16" height="10" rx="2" fill="#4a63c8" />
    <text x="828" y="622" fontSize="8" fill="#fff" textAnchor="middle" fontFamily="Roboto">49</text>
    <rect x="590" y="692" width="16" height="10" rx="2" fill="#4a63c8" />
    <text x="598" y="700" fontSize="8" fill="#fff" textAnchor="middle" fontFamily="Roboto">49</text>
    {/* pois */}
    <circle cx="428" cy="774" r="5" fill="#ef6dbb" /><circle cx="428" cy="774" r="2" fill="#fff" />
    <circle cx="642" cy="701" r="5" fill="#5ca5e5" /><circle cx="642" cy="701" r="2" fill="#fff" />
    <circle cx="617" cy="894" r="5" fill="#2f9d35" /><circle cx="617" cy="894" r="2" fill="#fff" />
    <circle cx="1877" cy="878" r="5" fill="#e5a22c" />
    {mapLabels.map(([t, x, y, r, c, s]) => (
      <text
        key={t + x}
        x={x}
        y={y}
        fontSize={s}
        fill={c}
        textAnchor="middle"
        fontFamily="Roboto"
        transform={r ? `rotate(${r} ${x} ${y})` : undefined}
      >
        {t}
      </text>
    ))}
    {pins.map(([x, y]) => (
      <g key={x}>
        <ellipse cx={x} cy={y + 16} rx="9" ry="6" fill="#5fa81f" opacity=".3" />
        <rect x={x - 10} y={y - 10} width="20" height="20" rx="4" fill="#5fa81f" transform={`rotate(45 ${x} ${y})`} />
      </g>
    ))}
  </svg>
);

const TrafficModeIcon = () => (
  <svg width="22" height="22" viewBox="0 0 24 24" fill="currentColor">
    <path d="M8 2h8a1 1 0 0 1 1 1v1h3l-3 4v2h3l-3 4v2h3l-3 3a3 3 0 0 1-3 3h-4a3 3 0 0 1-3-3l-3-3h3v-2L4 10h3V8L4 4h3V3a1 1 0 0 1 1-1z" />
    <circle cx="12" cy="6.500" r="1.600" fill="#00b388" /><circle cx="12" cy="12" r="1.600" fill="#00b388" /><circle cx="12" cy="17.500" r="1.600" fill="#00b388" />
  </svg>
);

const AlarmModeIcon = () => (
  <svg width="24" height="24" viewBox="0 0 24 24" fill="none" stroke="currentColor" strokeWidth="1.600" strokeLinecap="round">
    <path d="M6 19l3.500-8h5L18 19zM4 19h16M12 3v3M5 6l2 2M19 6l-2 2M2 13h3M19 13h3" />
  </svg>
);

const RouteModeIcon = () => (
  <svg width="24" height="24" viewBox="0 0 24 24" fill="none" stroke="currentColor" strokeWidth="1.500" strokeLinecap="round" strokeLinejoin="round">
    <circle cx="4" cy="4" r="2" /><circle cx="20" cy="4" r="2" /><circle cx="4" cy="20" r="2" /><circle cx="20" cy="20" r="2" />
    <path d="M4 6v12M20 6v12M7 4h9M14 2l2 2-2 2M7 20h9M14 18l2 2-2 2" />
  </svg>
);

const CorridorModeIcon = () => (
  <svg width="24" height="24" viewBox="0 0 24 24" fill="none" strokeWidth="1.500" strokeLinecap="round">
    <path stroke="#2f3237" d="M5 6v11a3.500 3.500 0 0 0 7 0V7a3.500 3.500 0 0 1 7 0v11" />
    <path stroke="#d9902a" d="M7 7v10a1.500 1.500 0 0 0 3 0V7a5.500 5.500 0 0 1 7-5" />
    <circle cx="5" cy="4" r="2" stroke="#2f3237" /><circle cx="19" cy="20" r="2" stroke="#2f3237" />
  </svg>
);

const WarnIcon = () => (
  <svg width="24" height="24" viewBox="0 0 24 24" fill="none" stroke="#f5c400" strokeWidth="1.600">
    <rect x="5.500" y="5.500" width="13" height="13" rx="2" transform="rotate(45 12 12)" />
    <path d="M12 7.500v6M12 15.500v1.500" strokeLinecap="round" />
  </svg>
);

const InfoIcon = () => (
  <svg width="24" height="24" viewBox="0 0 24 24" fill="none" stroke="#2f7df0" strokeWidth="1.500">
    <circle cx="12" cy="12" r="10" />
    <path d="M12 10.500v7M12 6.500v1.500" strokeLinecap="round" />
  </svg>
);

const AlertIcon = () => (
  <svg width="24" height="24" viewBox="0 0 24 24" fill="none" stroke="#ee3333" strokeWidth="1.600" strokeLinecap="round">
    <path d="M12 3v13M12 20v1" />
  </svg>
);

const App = () => (
  <Page>
    <GlobalStyle />
    <TopBar>
      <Logo><span>e</span>Daptiva</Logo>
      <Location>
        <MapPin size={17} strokeWidth={1.5} />
        Zlín
        <ChevronDown size={14} strokeWidth={1.8} />
      </Location>
    </TopBar>
    <Main>
      <LeftPanel>
        <TitleMark />
        <SearchBox />
        <CardList>
          <Card $h={182} $mb={21} $selected><CardHead $h={54} /></Card>
          <Card $h={188} $mb={11}><CardHead $h={67} /></Card>
          <Card $h={195} $mb={10}>
            <CardHead $h={71}>
              <CardTitle>ZL_Bat-Gah</CardTitle>
              <CardState>Operation</CardState>
            </CardHead>
            <CardBody>
              <CardName>117 Gahurova x T. Bati + ASA (RYO), Zlín</CardName>
              <CardLine>Control mode: <b>Local schedule control</b></CardLine>
              <CardLine>Signal plan: <b>16_86_D+K</b></CardLine>
              <CardLine>Controller type: <b>RS 4</b></CardLine>
              <CardDot />
            </CardBody>
          </Card>
          <Card $h={195} $mb={0}>
            <CardHead $h={71}><CardTitle>ZL_Bre-Bat</CardTitle></CardHead>
          </Card>
        </CardList>
        <BottomBar>
          <ModeButton $active><TrafficModeIcon /></ModeButton>
          <ModeButton><AlarmModeIcon /></ModeButton>
          <ModeButton><RouteModeIcon /></ModeButton>
          <ModeButton><CorridorModeIcon /></ModeButton>
        </BottomBar>
      </LeftPanel>
      <MapArea>
        <MapBackground />
        <Attribution>Leaflet | © <span>Mapbox</span> © <span>OpenStreetMap</span></Attribution>
        <StatusBar>
          <List size={24} strokeWidth={1.6} color="#2b2f33" />
          <AlertIcon />
          <X size={26} strokeWidth={1.6} color="#ee3333" />
          <WarnIcon />
          <InfoIcon />
          <Check size={24} strokeWidth={1.8} color="#00ae86" />
        </StatusBar>
      </MapArea>
    </Main>

    <PopupWindow $left={13} $top={71} $w={783} $h={572} $framed>
      <TitleBar>
        <Favicon>e</Favicon>
        eDaptiva - control panel 3.8.1.0 - Google Chrome
        <WindowControls>
          <Minus size={14} />
          <Square size={14} strokeWidth={1.5} />
          <X size={16} strokeWidth={1.5} />
        </WindowControls>
      </TitleBar>
      <AddressBar $h={33}>
        <Lock size={12} fill="#5f6368" color="#5f6368" />
        <div>demo-edaptiva-dev.cross.cz<span>/utc-control-panel.html</span></div>
      </AddressBar>
      <WindowHead>
        <WindowTitle>ZL_Dre-Bat</WindowTitle>
        <WindowSub>122 U Dřevnice x T. Bati (OMV), Zlín</WindowSub>
      </WindowHead>
      <Tabs>
        <Tab>Bar Diagram</Tab>
        <Tab $active>Intersection detail</Tab>
      </Tabs>
      <WindowContent>
        <IntersectionView><IntersectionDrawing /></IntersectionView>
      </WindowContent>
      <BottomNav />
    </PopupWindow>

    <PopupWindow $left={850} $top={-2} $w={1024} $h={829}>
      <AddressBar $h={29}>
        <Lock size={12} fill="#5f6368" color="#5f6368" />
        <div>demo-edaptiva-dev.cross.cz<span>/utc-control-panel.html</span></div>
      </AddressBar>
      <WindowHead>
        <WindowTitle>ZL_Ste-Osv</WindowTitle>
        <WindowSub>115 Stefánikova x Osvoboditelů + Skolní(Centroprojekt), Zlín</WindowSub>
      </WindowHead>
      <Tabs>
        <Tab $active>Bar Diagram</Tab>
        <Tab>Intersection detail</Tab>
      </Tabs>
      <WindowContent>
        <ScrollThumb />
        <BarDiagram />
        <PlayerPanel>
          <PlayerButton><Pause size={24} strokeWidth={1.5} /></PlayerButton>
          <PlayerButton><RefreshCw size={22} strokeWidth={1.5} /></PlayerButton>
          <PlayerButton $active><ArrowRight size={22} strokeWidth={1.5} /></PlayerButton>
          <PlayerButton><ListFilter size={22} strokeWidth={1.5} /></PlayerButton>
          <SliderTrack><SliderThumb /></SliderTrack>
          <ClosePlayer><X size={20} strokeWidth={1.5} /></ClosePlayer>
        </PlayerPanel>
      </WindowContent>
      <BottomNav />
    </PopupWindow>
  </Page>
);

export default App;
